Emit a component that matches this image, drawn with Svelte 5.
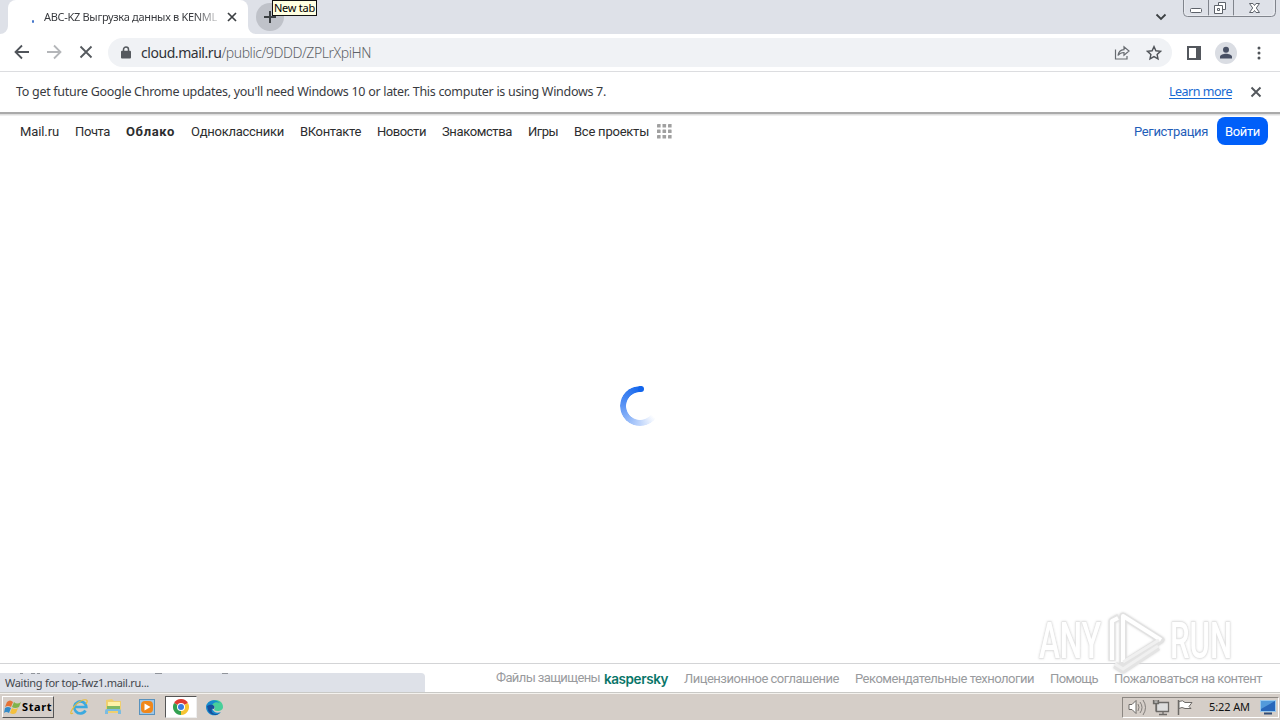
<script>
  const nav = [
    ['Mail.ru', 39], ['Почта', 35], ['Облако', 49], ['Одноклассники', 93], ['ВКонтакте', 61],
    ['Новости', 49], ['Знакомства', 70], ['Игры', 30], ['Все проекты', 75]
  ];
  const footer = [
    ['Лицензионное соглашение', 155], ['Рекомендательные технологии', 179], ['Помощь', 48], ['Пожаловаться на контент', 148]
  ];
  const dots = [0, 5.5, 11];

  // Spreads the letters of a label so that it fills the given width.
  function fit(node, width) {
    node.style.letterSpacing = '0px';
    const range = document.createRange();
    range.selectNodeContents(node);
    const natural = range.getBoundingClientRect().width;
    node.style.letterSpacing = (width - natural) / node.textContent.length + 'px';
    node.style.width = width + 'px';
  }
</script>

<div class="screen">
  <header class="strip">
    <div class="tab">
      <i class="loading"></i>
      <span class="title"><span class="t" use:fit={173}>ABC-KZ Выгрузка данных в KENML</span></span>
      <svg class="tabclose" width="10" height="10" viewBox="0 0 10 10"><path d="M1 1l8 8M9 1L1 9" stroke="#3c4043" stroke-width="1.7" /></svg>
      <svg class="foot left" width="8" height="8"><path d="M8 0v8H0A8 8 0 0 0 8 0" fill="#fff" /></svg>
      <svg class="foot right" width="8" height="8"><path d="M0 0v8h8A8 8 0 0 1 0 0" fill="#fff" /></svg>
    </div>
    <div class="plus">
      <svg width="12" height="12"><path d="M6 0v12M0 6h12" stroke="#3c4043" stroke-width="2" /></svg>
      <div class="tip"><span class="t" use:fit={41}>New tab</span></div>
    </div>
    <svg class="chev" width="12" height="8"><path d="M1.500 1.500L6 6l4.500-4.500" fill="none" stroke="#3c4043" stroke-width="1.800" /></svg>
    <svg class="win" width="94" height="18" fill="none">
      <path d="M.5 0v12.500q0 4 4 4h84q4 0 4-4V0M25.500 0v16M50.500 0v16" stroke="#80848c" />
      <path d="M1.500 0v12q0 3.500 3 3.500h83q3.500 0 3.500-3.500V0" stroke="#eef0f4" opacity=".6" />
      <rect x="7.500" y="8.500" width="11" height="4" rx="1" fill="#fff" stroke="#5d626a" />
      <path d="M35.500 2.500h7v7h-7z" fill="#fff" stroke="#5d626a" />
      <path d="M31.500 5.500h8v8h-8z" fill="#fff" stroke="#5d626a" />
      <path d="M34.500 8.500h2v2h-2z" stroke="#5d626a" />
      <path d="M66.500 3.500h3.500l1.500 2 1.500-2h3.500l-3.200 4.500 3.200 4.500H73l-1.500-2-1.500 2h-3.500l3.200-4.500z" fill="#fff" stroke="#5d626a" />
    </svg>
  </header>

  <div class="toolbar">
    <svg class="tools" width="92" height="38" fill="none" stroke-width="1.800">
      <path d="M21 18H8M14 11.500L7.500 18l6.500 6.500" stroke="#50545a" />
      <path d="M39 18h13M46 11.500l6.500 6.500-6.500 6.500" stroke="#b4b6b9" />
      <path d="M72.500 12.500l11 11M83.500 12.500l-11 11" stroke="#55595e" />
    </svg>
    <div class="omni">
      <svg width="10" height="13"><path d="M2.500 6V3.600a2.500 2.500 0 0 1 5 0V6" fill="none" stroke="#55595e" stroke-width="1.500" /><rect y="4.800" width="10" height="7.700" rx="1" fill="#55595e" /></svg>
      <span class="url t" use:fit={230}><b>cloud.mail.ru</b>/public/9DDD/ZPLrXpiHN</span>
      <svg class="share" width="17" height="16" fill="none" stroke="#686c71" stroke-width="1.200"><path d="M1.500 4.500v9.500h11.500V11M4 10.500C4.500 7 7 5 10 4.700V1.800L15 6l-5 4.200V7.500C7.200 7.500 5.400 8.500 4 10.500z" /></svg>
      <svg class="star" width="16" height="16"><path d="M8 1.600l1.900 4.200 4.600.500-3.400 3.100.900 4.500L8 11.600l-4 2.300.900-4.500L1.500 6.300l4.600-.500z" fill="none" stroke="#505459" stroke-width="1.400" /></svg>
    </div>
    <svg class="panel" width="14" height="14"><path d="M1 1h12v12H1z" fill="none" stroke="#53575d" stroke-width="2" /><path d="M9 1h4v12H9z" fill="#53575d" /></svg>
    <svg class="avatar" width="22" height="22"><circle cx="11" cy="11" r="11" fill="#dadde3" /><circle cx="11" cy="7.800" r="3" fill="#485064" /><path d="M5 16.500v-1.700c0-2 3.500-3 6-3s6 1 6 3v1.700z" fill="#485064" /></svg>
    <svg class="more" width="4" height="16" fill="#505459"><circle cx="2" cy="3" r="1.500" /><circle cx="2" cy="8" r="1.500" /><circle cx="2" cy="13" r="1.500" /></svg>
  </div>

  <div class="notice">
    <span class="t" use:fit={590}>To get future Google Chrome updates, you'll need Windows 10 or later. This computer is using Windows 7.</span>
    <span class="learn t" use:fit={63}>Learn more</span>
    <svg width="12" height="12"><path d="M1.500 1.500l9 9M10.500 1.500l-9 9" stroke="#53575c" stroke-width="1.900" /></svg>
  </div>

  <main>
    <nav>
      {#each nav as [label, width], i}
        <span class="t" class:bold={i === 2} use:fit={width}>{label}</span>
      {/each}
      <svg class="grid" width="15" height="15" fill="#a0a0a0">
        {#each dots as y}{#each dots as x}<rect {x} {y} width="3.600" height="3.600" rx=".4" />{/each}{/each}
      </svg>
      <span class="reg t" use:fit={74}>Регистрация</span>
      <span class="login"><span class="t" use:fit={35}>Войти</span></span>
    </nav>
    <div class="body"><div class="spinner"><i></i></div></div>
    <footer>
      <span class="protect t" use:fit={104}>Файлы защищены</span>
      <span class="kasp t" use:fit={64}>kaspersky</span>
      {#each footer as [label, width]}
        <span class="link t" use:fit={width}>{label}</span>
      {/each}
    </footer>
    <div class="status">
      <svg class="hidden" width="230" height="2" fill="#90949b"><path d="M20 0h3v1h-3zM31 0h4v1h-4zM37 0h3v1h-3zM78 0h3v1h-3zM155 0h7v1h-7zM222 0h6v1h-6z" /></svg>
      <span class="t" use:fit={144}>Waiting for top-fwz1.mail.ru...</span>
    </div>
    <svg class="mark" width="204" height="68" viewBox="0 0 204 68" fill="none">
      <g class="halo" stroke-linejoin="round">
        <text x="4" y="50" textLength="62" lengthAdjust="spacingAndGlyphs">ANY</text>
        <text x="135" y="50" textLength="62" lengthAdjust="spacingAndGlyphs">RUN</text>
        <path d="M88 8L126 32 88 56z" stroke="#e2e2e2" stroke-width="7" />
        <path d="M77 53V13l7-4M80 57l8 5 35-23" stroke="#e4e4e4" stroke-width="7" />
      </g>
      <path d="M88 54V8l38 24M77 52V13l6-3" stroke="#fff" stroke-width="4" stroke-linejoin="round" />
      <path d="M88 54l36-22M80 56l8 5 35-23" stroke="#f0f0f0" stroke-width="3" />
    </svg>
  </main>

  <div class="taskbar">
    <div class="start">
      <svg width="18" height="17"><path d="M3 3q3-3 6 0L7 8Q4 6 1 8z" fill="#e67335" /><path d="M10 3q3 3 7 0l-2 5q-4 2-7 0z" fill="#80b34b" /><path d="M1 9q3-2 6 0l-2 5q-3-2-5 0z" fill="#348bc8" /><path d="M8 9q3 2 6 0l-2 5q-3 2-6 0z" fill="#f4c03d" /></svg>
      <span class="t" use:fit={30}>Start</span>
    </div>
    <svg class="app" width="34" height="22" fill="none"><path d="M22.500 14.500a6 6 0 1 1 .8-3.500H12" stroke="#3ba9df" stroke-width="2.700" /><path d="M10 17C4 21 11 7 20 4c5-1 5 1 3 4" stroke="#e8bd3a" stroke-width="1.200" /></svg>
    <svg class="app" width="34" height="22"><path d="M9 4l6-1 2 2h7v12H9z" fill="#efcf70" /><path d="M11 6h12v5H11z" fill="#fff1a7" /><path d="M10 10h13v3H10z" fill="#81b862" /><path d="M8 18v-3q0-2 2-2h12q2 0 2 2v3h-3v-3H11v3z" fill="#7bbce2" /></svg>
    <svg class="app" width="34" height="22"><rect x="8.500" y="3.500" width="15" height="15" fill="#9fc6e6" stroke="#5992bd" /><rect x="10" y="5" width="12" height="12" rx="4" fill="#f0871a" /><path d="M13.500 7.500l6 3.500-6 3.500z" fill="#fff" /></svg>
    <div class="active">
      <svg width="16" height="16" viewBox="0 0 16 16"><path d="M8 8L1.070 4A8 8 0 0 1 14.930 4z" fill="#df3c32" /><path d="M8 8l6.930-4A8 8 0 0 1 8 16z" fill="#f6c432" /><path d="M8 8v8A8 8 0 0 1 1.070 4z" fill="#33a151" /><circle cx="8" cy="8" r="4" fill="#fff" /><circle cx="8" cy="8" r="3" fill="#377ce2" /></svg>
    </div>
    <svg class="app" width="34" height="22"><path d="M10 9c3-7 16-7 16 2 0 4-6 5-9 3 3-4-2-6-7-5" fill="#48cf9a" /><path d="M9 11c0-5 8-10 14-4-4-2-9 0-8 5 1 4 5 6 9 4-6 7-15 2-15-5" fill="#168bce" /><path d="M10 10c5-3 9 0 7 3-2-1-3 0-2 3 2 3 6 2 8 1-4 4-11 1-12-3z" fill="#174f9b" /></svg>
    <div class="tray">
      <svg width="78" height="20" fill="none" stroke="#6d6a67">
        <path d="M6 7.500h3l4-4v13l-4-4H6z" fill="#fff" /><path d="M15 7q2 3 0 7M17 5q4 5.500 0 11M20 3q5 7.500 0 15" stroke-width=".8" />
        <path d="M33.500 5.500h12v9h-12zM36 17.500h8M40 14.500v3" fill="#dedede" stroke-width="1.300" />
        <path d="M30.500 3v3.500h5V3M33 6.500v8" stroke-width="1.300" /><path d="M31 4h4v2h-4z" fill="#eee" />
        <path d="M55.500 3v15" stroke-width="1.500" /><path d="M56 4.500q4-2 6 1h7l-3 4 2 2h-6q-3-2-6 0z" fill="#fff" />
      </svg>
      <span class="clock t" use:fit={41}>5:22 AM</span>
      <svg class="desk" width="16" height="15"><rect x=".5" y=".5" width="15" height="11" fill="#2867bb" stroke="#9ac9ed" /><path d="M1 1h14L1 9z" fill="#529adb" /><path d="M4 13.500h8" stroke="#314c75" stroke-width="2" /></svg>
    </div>
  </div>
</div>

<style>
  :global(body) { overflow: hidden; }
  .screen { width: 1280px; height: 720px; overflow: hidden; background: #fff; font: 12px "Noto Sans", sans-serif; color: #393b3f; display: flex; flex-direction: column; }
  svg { display: block; flex: none; }
  .t { display: inline-block; white-space: nowrap; flex: none; }
  .strip { height: 34px; background: #dee1e8; display: flex; flex: none; box-sizing: border-box; padding-left: 8px; }
  .tab { position: relative; width: 240px; height: 34px; background: #fff; border-radius: 8px 8px 0 0; display: flex; align-items: center; }
  .loading { width: 2px; height: 3px; margin: 8px 9px 0 24px; background: #4778cb; border-radius: 1px; }
  .title { width: 174px; padding-left: 1px; box-sizing: border-box; font: 11px/20px "Noto Sans", sans-serif; -webkit-mask: linear-gradient(90deg, #000 87%, rgba(0, 0, 0, .25)); mask: linear-gradient(90deg, #000 87%, rgba(0, 0, 0, .25)); }
  .tabclose { margin-left: 10px; }
  .foot { position: absolute; bottom: 0; }
  .left { left: -8px; }
  .right { right: -8px; }
  .plus { position: relative; width: 28px; height: 28px; margin: 3px 0 0 8px; background: #bfc2c9; border-radius: 50%; display: flex; align-items: center; justify-content: center; }
  .tip { position: absolute; left: 16px; top: -3px; width: 45px; height: 16px; border: 1px solid #111; box-sizing: border-box; background: #ffffe1; color: #000; padding-left: 1px; font: 11px/14px "Noto Sans", sans-serif; }
  .chev { margin: 13px 16px 0 auto; }
  .win { margin-right: 3px; }
  .toolbar { height: 38px; border-bottom: 1px solid #dcdde0; box-sizing: border-box; flex: none; display: flex; align-items: center; padding-left: 8px; }
  .omni { width: 1064px; height: 29px; margin-left: 8px; border-radius: 15px; background: #f0f2f5; display: flex; align-items: center; padding-left: 13px; box-sizing: border-box; }
  .url { margin-left: 10px; font: 14px/24px "Noto Sans", sans-serif; font-weight: 300; color: #5e6267; }
  .url b { font-weight: 400; color: #303338; }
  .share { margin-left: auto; }
  .star { margin: 0 10px 0 15px; }
  .panel { margin-left: 15px; }
  .avatar { margin-left: 14px; }
  .more { margin-left: 20px; }
  .notice { height: 40px; flex: none; display: flex; align-items: center; padding: 0 18px 0 16px; font-size: 12.500px; }
  .notice .t { margin-top: -2px; }
  .notice .learn { margin: -2px 18px 0 auto; color: #1769d2; text-decoration: underline; text-underline-offset: 2px; }
  main { position: relative; height: 581px; flex: none; display: flex; flex-direction: column; border-top: 2px solid #aaa; box-sizing: border-box; font-family: Roboto, sans-serif; }
  nav { height: 34px; box-sizing: border-box; background: linear-gradient(#dedede 0 1px, #eee 1px 2px, #fff 2px); display: flex; align-items: center; gap: 16px; padding: 0 12px 0 20px; font-size: 13px; color: #2c2d2e; }
  .bold { font-weight: 700; }
  .grid { margin-left: -8px; }
  .reg { margin-left: auto; color: #1f5eb9; }
  .login { width: 51px; height: 28px; margin-left: -7px; display: flex; align-items: center; justify-content: center; background: #005ff9; border-radius: 8px; color: #fff; }
  .body { flex: 1; display: flex; justify-content: center; padding-top: 238px; box-sizing: border-box; }
  .spinner { position: relative; width: 40px; height: 40px; }
  .spinner::before { content: ''; display: block; width: 40px; height: 40px; border-radius: 50%; background: conic-gradient(from 5deg, transparent 0 34%, #b9d1fb 50%, #5792f4 75%, #1265ec 100%); -webkit-mask: radial-gradient(circle, transparent 13.500px, #000 14.300px); mask: radial-gradient(circle, transparent 13.500px, #000 14.300px); }
  .spinner i { position: absolute; left: 18px; top: .2px; width: 6px; height: 6px; border-radius: 50%; background: #1265ec; }
  footer { height: 30px; border-top: 1px solid #d3d4d6; border-bottom: 1px solid #c9c9c6; box-sizing: border-box; display: flex; align-items: center; padding-left: 496px; font-size: 13px; color: #999b9e; }
  .protect { margin-top: -1px; }
  .kasp { margin: 1px 16px 0 4px; color: #087568; font: 600 13.500px/18px Inter, sans-serif; }
  .link { margin-right: 16px; }
  .status { position: absolute; left: 0; bottom: 1px; width: 425px; height: 19px; box-sizing: border-box; padding-left: 5px; border-radius: 0 4px 0 0; background: #dee1e8; color: #42464c; font: 11px/20px "Noto Sans", sans-serif; }
  .hidden { position: absolute; left: 0; top: 0; }
  .mark { position: absolute; left: 1035px; top: 494px; }
  .halo { filter: drop-shadow(0 0 1px #d8d8d8); }
  .mark text { font: 500 50px Roboto, sans-serif; fill: #fff; stroke: #e4e4e4; stroke-width: 1.500px; paint-order: stroke; }
  .taskbar { height: 27px; flex: none; background: #d5cec8; border-top: 1px solid #f4f2ee; display: flex; align-items: center; padding: 0 0 0 2px; box-sizing: border-box; }
  .start { width: 52px; height: 22px; border: 1px solid; border-color: #fff #555 #555 #fff; box-sizing: border-box; display: flex; align-items: center; padding-left: 1px; margin-right: 9px; color: #000; font: 700 11px/16px "Noto Sans", sans-serif; }
  .active { width: 32px; height: 22px; background: #fff; border: 1px solid; border-color: #555 #eee #eee #555; box-sizing: border-box; display: flex; align-items: center; justify-content: center; }
  .tray { width: 157px; height: 21px; margin: 0 1px 0 auto; border: 1px solid; border-color: #8c8782 #fff #fff #8c8782; box-sizing: border-box; display: flex; align-items: center; }
  .clock { margin-left: 8px; color: #111; font: 11px/18px "Noto Sans", sans-serif; }
  .desk { margin-left: 10px; }
</style>
